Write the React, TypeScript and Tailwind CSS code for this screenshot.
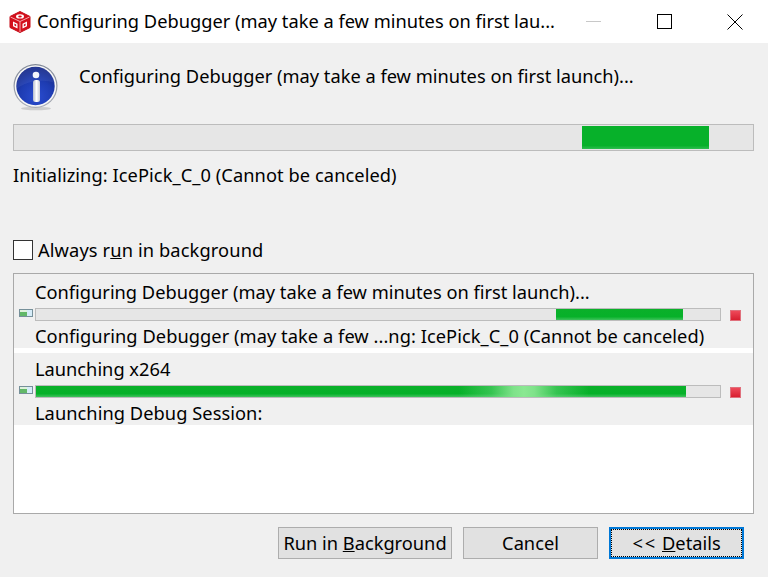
import React from "react";

const FONT = "font-['Noto_Sans','Open_Sans',sans-serif]";

function DiceLogo() {
  return (
    <svg width="24" height="24" viewBox="0 0 24 24" className="shrink-0">
      <path d="M12 1.5 L22 6.5 V17.5 L12 22.5 L2 17.5 V6.5 Z" fill="#d4101c" stroke="#c50d18" strokeWidth="1" strokeLinejoin="round" />
      <path d="M2.5 7 L12 11.5 L21.5 7 M12 11.5 V22" stroke="#f3a9ad" strokeWidth="1" fill="none" />
      <ellipse cx="12" cy="6.4" rx="4" ry="2.2" fill="#fff" />
      <ellipse cx="12" cy="6.4" rx="1.8" ry="1" fill="#d4101c" />
      <path d="M5 11.5 L9.5 13.8 V18.5 L5 16.2 Z" fill="#fff" />
      <path d="M19 11.5 L14.5 13.8 V18.5 L19 16.2 Z" fill="#fff" />
      <path d="M6.4 13.6 L8.2 14.5 V16.4 L6.4 15.5 Z" fill="#d4101c" />
      <path d="M17.6 13.6 L15.8 14.5 V16.4 L17.6 15.5 Z" fill="#d4101c" />
    </svg>
  );
}

function InfoIcon() {
  return (
    <svg width="46" height="48" viewBox="0 0 46 48" className="shrink-0">
      <defs>
        <radialGradient id="blue" cx="52%" cy="78%" r="72%">
          <stop offset="0%" stopColor="#2a4cd0" />
          <stop offset="60%" stopColor="#1e3cb2" />
          <stop offset="100%" stopColor="#182a86" />
        </radialGradient>
        <linearGradient id="ring" x1="0" y1="0" x2="0" y2="1">
          <stop offset="0%" stopColor="#7f8796" />
          <stop offset="100%" stopColor="#a9adb6" />
        </linearGradient>
        <linearGradient id="stem" x1="0" y1="0" x2="1" y2="0">
          <stop offset="0%" stopColor="#b4bbcc" />
          <stop offset="50%" stopColor="#ffffff" />
          <stop offset="100%" stopColor="#c6cad6" />
        </linearGradient>
      </defs>
      <ellipse cx="23" cy="45.5" rx="15" ry="1.8" fill="#000" opacity="0.14" />
      <circle cx="22.5" cy="23" r="22" fill="url(#ring)" />
      <circle cx="22.5" cy="23" r="20.8" fill="#f7f7f7" />
      <circle cx="22.5" cy="23" r="19.2" fill="url(#blue)" />
      <path d="M3.6 26 C11 19 30 15 41.6 20 C40 10 32 4 22.5 4 C12 4 3 13 3.6 26 Z" fill="#5f78d0" opacity="0.2" />
      <circle cx="23" cy="12" r="3.3" fill="#f5f6fb" />
      <rect x="20" y="17" width="7" height="22" rx="2.5" fill="url(#stem)" />
    </svg>
  );
}

function Bar({ offset, fill, glow }: { offset: number; fill: number; glow?: boolean }) {
  return (
    <div className="box-border flex h-[13px] w-[686px] border border-[#bcbcbc] bg-[#e6e6e6]">
      <div className="shrink-0" style={{ width: offset }} />
      <div
        className="relative h-full overflow-hidden bg-[linear-gradient(#0bb02a_0%,#06b129_70%,#3fc25c_100%)]"
        style={{ width: fill }}
      >
        {glow && (
          <div className="absolute top-0 bottom-0 left-[423px] w-[130px] bg-[linear-gradient(90deg,rgba(110,220,130,0)_0%,rgba(110,220,130,0.45)_25%,#7fe28a_42%,#8ae892_50%,#7fe28a_58%,rgba(110,220,130,0.45)_75%,rgba(110,220,130,0)_100%)]" />
        )}
      </div>
    </div>
  );
}

function Row({
  title,
  detail,
  offset,
  fill,
  glow,
  first,
}: {
  title: string;
  detail: string;
  offset: number;
  fill: number;
  glow?: boolean;
  first?: boolean;
}) {
  return (
    <div className="flex flex-col bg-[#f0f0f0] pl-[5px]">
      <div
        className={
          first
            ? "h-[34px] pl-[16px] pt-[5px] text-[18.25px] leading-[25px] whitespace-nowrap"
            : "h-[32px] pl-[16px] pt-[3px] text-[18.25px] leading-[25px] whitespace-nowrap"
        }
      >
        {title}
      </div>
      <div className="flex h-[13px] items-start">
        <div className="mt-px flex h-[8px] w-[14px] border border-[#76909a] bg-[#d6ecf8]">
          <div className="mr-px w-[7px] bg-[linear-gradient(#dff2dc_0%,#dff2dc_35%,#62b868_36%,#62b868_100%)]" />
        </div>
        <div className="w-[2px]" />
        <Bar offset={offset} fill={fill} glow={glow} />
        <div className="ml-[9px] mt-[2px] h-[11px] w-[11px] border border-[#e0707c] bg-[linear-gradient(#ee4a5a,#d81f30)]" />
      </div>
      <div className="h-[27px] pl-[16px] pt-[2px] text-[18.25px] leading-[25px] tracking-[0.05px] whitespace-nowrap">{detail}</div>
    </div>
  );
}

function Button({ children, width, focused }: { children: React.ReactNode; width: string; focused?: boolean }) {
  return (
    <button
      className={
        focused
          ? `${width} h-[32px] border-2 border-[#0078d7] bg-[#e1e1e1] text-[18.25px] leading-none outline-1 -outline-offset-3 outline-dotted outline-black`
          : `${width} h-[32px] border border-[#adadad] bg-[#e1e1e1] text-[18.25px] leading-none`
      }
    >
      {children}
    </button>
  );
}

export default function App() {
  return (
    <div className={`${FONT} flex h-[577px] w-[768px] flex-col overflow-hidden bg-[#f0f0f0] text-black`}>
      {/* Title bar */}
      <div className="flex h-[43px] shrink-0 items-center bg-white pl-[8px]">
        <DiceLogo />
        <span className="-mt-[2px] ml-[5px] text-[18.25px] whitespace-nowrap">Configuring Debugger (may take a few minutes on first lau...</span>
        <div className="ml-auto flex h-full items-center">
          <div className="flex w-[46px] justify-center">
            <div className="h-px w-[15px] bg-[#c8c8c8]" />
          </div>
          <div className="ml-[25px] flex w-[46px] justify-center">
            <div className="h-[15px] w-[15px] border border-black" />
          </div>
          <div className="ml-[25px] mr-[10px] flex w-[46px] justify-center">
            <svg width="16" height="16" viewBox="0 0 16 16">
              <path d="M0.5 0.5 L15.5 15.5 M15.5 0.5 L0.5 15.5" stroke="#000" strokeWidth="1" />
            </svg>
          </div>
        </div>
      </div>

      {/* Message */}
      <div className="flex h-[81px] shrink-0 px-[13px] pt-[20px]">
        <InfoIcon />
        <div className="-mt-px ml-[20px] text-[18.25px] leading-[28px] whitespace-nowrap">Configuring Debugger (may take a few minutes on first launch)...</div>
      </div>

      {/* Main progress */}
      <div className="mx-[13px] flex h-[27px] w-[741px] shrink-0 border border-[#bcbcbc] bg-[#e6e6e6] p-px">
        <div className="w-[567px] shrink-0" />
        <div className="h-full w-[127px] bg-[linear-gradient(#07b12a_0%,#07b12a_85%,#2fbd50_100%)]" />
      </div>

      <div className="mx-[13px] mt-[10px] h-[28px] shrink-0 text-[18.25px] leading-[28px] tracking-[0.07px] whitespace-nowrap">Initializing: IcePick_C_0 (Cannot be canceled)</div>

      {/* Always run */}
      <div className="mx-[13px] mt-[50px] flex h-[21px] shrink-0 items-center">
        <div className="h-[20px] w-[20px] border border-[#333] bg-white" />
        <span className="ml-[5px] text-[18.25px] leading-[20px] tracking-[0.12px] whitespace-nowrap">
          Always r<span className="underline">u</span>n in background
        </span>
      </div>

      {/* Job list */}
      <div className="mx-[13px] mt-[13px] h-[241px] w-[741px] shrink-0 border border-[#a9a9a9] bg-white">
        <Row
          first
          title="Configuring Debugger (may take a few minutes on first launch)..."
          detail="Configuring Debugger (may take a few ...ng: IcePick_C_0 (Cannot be canceled)"
          offset={520}
          fill={127}
        />
        <div className="h-[5px] bg-white" />
        <Row title="Launching x264" detail="Launching Debug Session:" offset={0} fill={650} glow />
      </div>

      {/* Buttons */}
      <div className="mt-[13px] flex justify-end gap-[11px] pr-[24px]">
        <Button width="w-[174px]">
          Run in <span className="underline">B</span>ackground
        </Button>
        <Button width="w-[135px]">Cancel</Button>
        <Button width="w-[135px]" focused>
          <span className="tracking-[2px]">&lt;&lt;</span> <span className="underline">D</span>etails
        </Button>
      </div>
    </div>
  );
}
